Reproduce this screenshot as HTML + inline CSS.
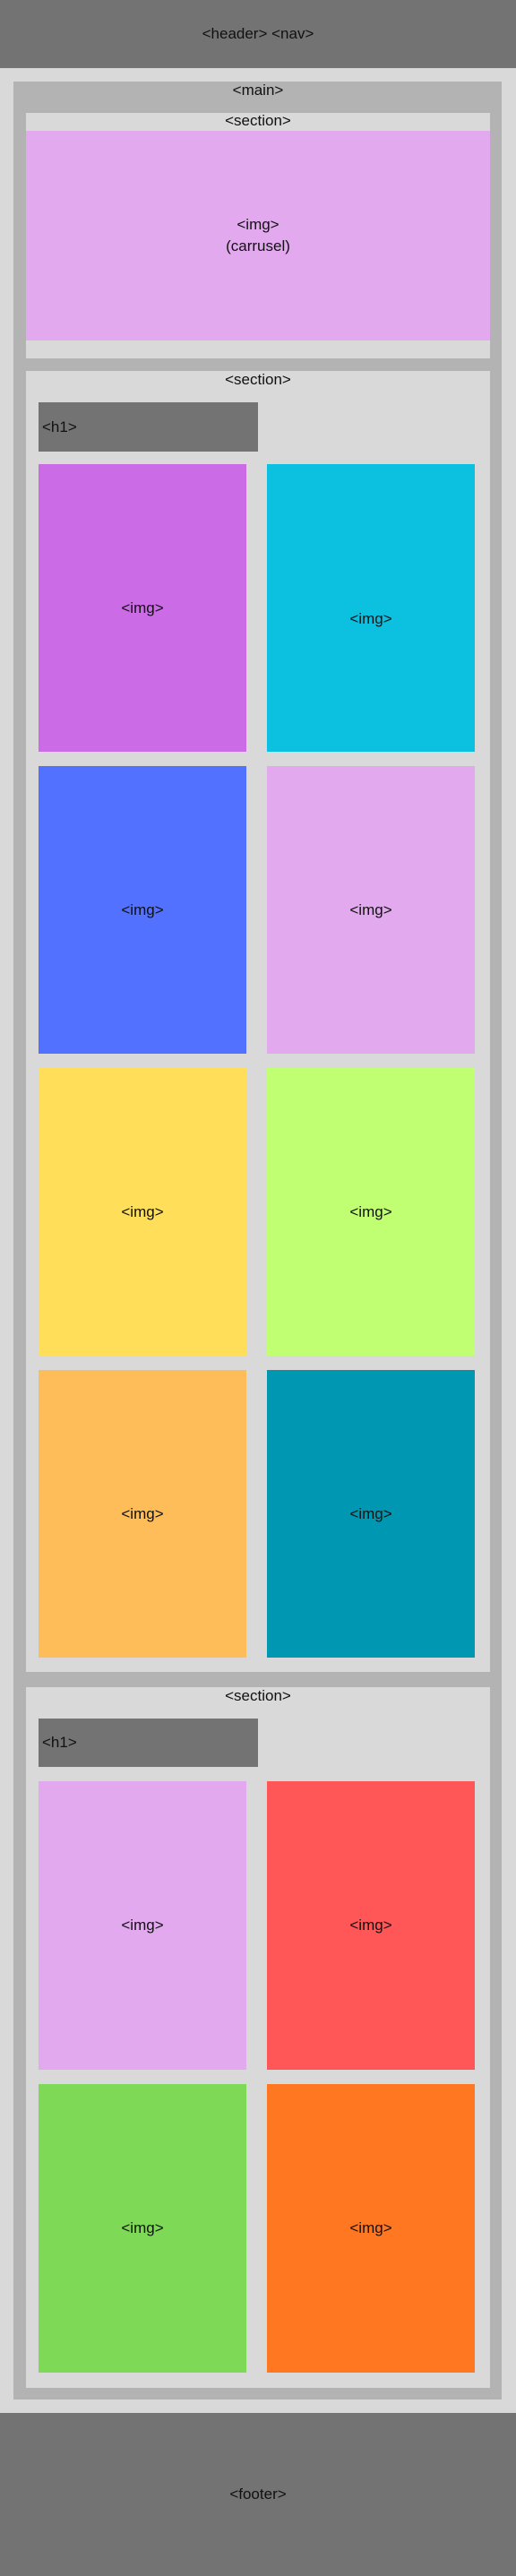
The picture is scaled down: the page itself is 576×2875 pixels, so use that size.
<!DOCTYPE html>
<html><head><meta charset="utf-8"><style>
*{margin:0;padding:0;box-sizing:border-box}
body{width:576px;height:2875px;background:#d9d9d9;position:relative;font-family:"Liberation Sans",sans-serif;font-size:17px;color:#111;overflow:hidden}
div{position:absolute}
.c{display:flex;align-items:center;justify-content:center;text-align:center}
.lab{left:0;right:0;text-align:center;line-height:20px}
</style></head><body>
<div class="c" style="left:0;top:0;width:576px;height:76px;background:#737373">&lt;header&gt; &lt;nav&gt;</div>
<div style="left:15px;top:91px;width:545px;height:2587px;background:#b3b3b3"></div>
<div class="lab" style="top:91px">&lt;main&gt;</div>

<div style="left:29px;top:126px;width:518px;height:274px;background:#d9d9d9"></div>
<div class="lab" style="top:125px">&lt;section&gt;</div>
<div class="c" style="left:29px;top:146px;width:518px;height:234px;background:#e2a9ef;line-height:24px">&lt;img&gt;<br>(carrusel)</div>

<div style="left:29px;top:414px;width:518px;height:1452px;background:#d9d9d9"></div>
<div class="lab" style="top:414px">&lt;section&gt;</div>
<div style="left:43px;top:449px;width:245px;height:55px;background:#737373;line-height:55px;padding-left:4px">&lt;h1&gt;</div>
<div class="c" style="left:43px;top:518px;width:232px;height:321px;background:#cb6ce6">&lt;img&gt;</div>
<div class="c" style="left:298px;top:518px;width:232px;height:321px;background:#0cc0df;padding-top:24px">&lt;img&gt;</div>
<div class="c" style="left:43px;top:855px;width:232px;height:321px;background:#5271ff">&lt;img&gt;</div>
<div class="c" style="left:298px;top:855px;width:232px;height:321px;background:#e2a9ef">&lt;img&gt;</div>
<div class="c" style="left:43px;top:1192px;width:232px;height:321px;background:#ffde59">&lt;img&gt;</div>
<div class="c" style="left:298px;top:1192px;width:232px;height:321px;background:#c1ff72">&lt;img&gt;</div>
<div class="c" style="left:43px;top:1529px;width:232px;height:321px;background:#ffbd59">&lt;img&gt;</div>
<div class="c" style="left:298px;top:1529px;width:232px;height:321px;background:#0097b2">&lt;img&gt;</div>

<div style="left:29px;top:1883px;width:518px;height:782px;background:#d9d9d9"></div>
<div class="lab" style="top:1883px">&lt;section&gt;</div>
<div style="left:43px;top:1918px;width:245px;height:54px;background:#737373;line-height:54px;padding-left:4px">&lt;h1&gt;</div>
<div class="c" style="left:43px;top:1988px;width:232px;height:322px;background:#e2a9ef">&lt;img&gt;</div>
<div class="c" style="left:298px;top:1988px;width:232px;height:322px;background:#ff5757">&lt;img&gt;</div>
<div class="c" style="left:43px;top:2326px;width:232px;height:322px;background:#7ed957">&lt;img&gt;</div>
<div class="c" style="left:298px;top:2326px;width:232px;height:322px;background:#ff7720">&lt;img&gt;</div>

<div class="c" style="left:0;top:2693px;width:576px;height:182px;background:#737373">&lt;footer&gt;</div>
</body></html>
